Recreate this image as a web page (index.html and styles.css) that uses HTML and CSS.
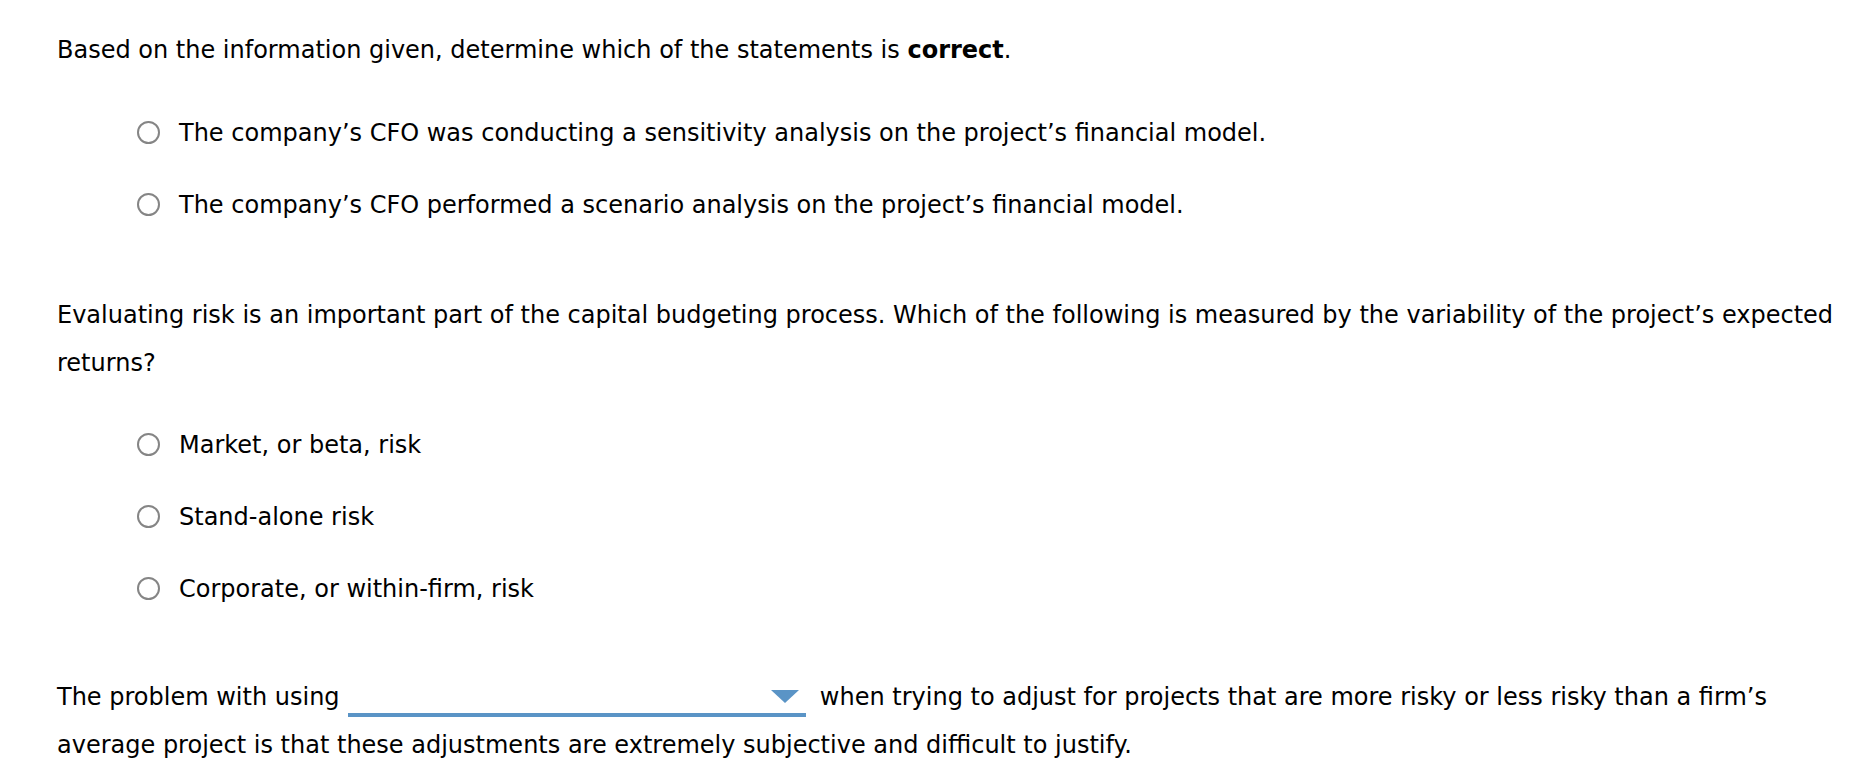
FILE: index.html
```html
<!DOCTYPE html>
<html>
<head>
<meta charset="utf-8">
<link rel="stylesheet" href="styles.css">
</head>
<body>
<div class="page">
  <p class="q q1">Based on the information given, determine which of the statements is <b>correct</b>.</p>
  <ul class="opts opts1">
    <li class="opt"><span class="radio"></span><span>The company’s CFO was conducting a sensitivity analysis on the project’s financial model.</span></li>
    <li class="opt"><span class="radio"></span><span>The company’s CFO performed a scenario analysis on the project’s financial model.</span></li>
  </ul>
  <p class="q q2">Evaluating risk is an important part of the capital budgeting process. Which of the following is measured by the variability of the project’s expected returns?</p>
  <ul class="opts opts2">
    <li class="opt"><span class="radio"></span><span>Market, or beta, risk</span></li>
    <li class="opt"><span class="radio"></span><span>Stand-alone risk</span></li>
    <li class="opt"><span class="radio"></span><span>Corporate, or within-firm, risk</span></li>
  </ul>
  <p class="q q3">The problem with using <span class="select"><span class="arrow"></span></span> when trying to adjust for projects that are more risky or less risky than a firm’s average project is that these adjustments are extremely subjective and difficult to justify.</p>
</div>
</body>
</html>
```
FILE: styles.css
```css
html, body {
  margin: 0;
  padding: 0;
  background: #ffffff;
}
body {
  font-family: "DejaVu Sans", Verdana, sans-serif;
  font-size: 24px;
  color: #000;
}
.page {
  padding: 26px 0 0 57px;
  width: 1790px;
}
.q {
  margin: 0;
  line-height: 48px;
}
.opts {
  list-style: none;
  margin: 0;
  padding: 0 0 0 80px;
}
.opts1 {
  margin-top: 23px;
}
.opt {
  display: flex;
  align-items: center;
  gap: 19px;
  height: 72px;
}
.radio {
  width: 19px;
  height: 19px;
  border: 2px solid #858585;
  border-radius: 50%;
  flex: none;
  margin-top: -1px;
}
.q2 {
  margin-top: 50px;
}
.opts2 {
  margin-top: 22px;
}
.q3 {
  margin-top: 48px;
}
.select {
  display: inline-block;
  position: relative;
  width: 458px;
  height: 26px;
  border-bottom: 4px solid #5a94c6;
  vertical-align: -12px;
  margin: 0 6px 0 1px;
}
.arrow {
  position: absolute;
  right: 7px;
  top: 3px;
  width: 0;
  height: 0;
  border-left: 14px solid transparent;
  border-right: 14px solid transparent;
  border-top: 13px solid #5a94c6;
}
```
